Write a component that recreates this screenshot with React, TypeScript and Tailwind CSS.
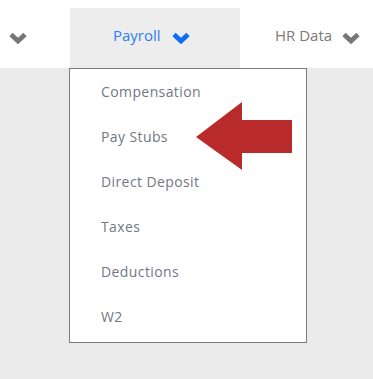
import React from "react";

const items = ["Compensation", "Pay Stubs", "Direct Deposit", "Taxes", "Deductions", "W2"];

function Chevron({ className }: { className?: string }) {
  return (
    <svg viewBox="0 0 18 12" className={className} fill="none" stroke="currentColor" strokeWidth="4.8" strokeLinejoin="miter">
      <polyline points="2,2.5 9,9 16,2.5" />
    </svg>
  );
}

function Arrow() {
  return (
    <svg viewBox="0 0 96 68" className="absolute left-[126px] top-[33px] h-[68px] w-[96px]">
      <polygon points="0,35 46,0 46,18 96,18 96,51 46,51 46,68" fill="#b92b2b" />
    </svg>
  );
}

export default function App() {
  return (
    <div className="h-[379px] w-[373px] overflow-hidden bg-[#ebebeb] font-['Open_Sans',sans-serif]">
      <nav className="flex h-[68px] bg-white">
        <div className="flex w-[70px] items-center pl-[9px] pt-[8px]">
          <Chevron className="h-[12px] w-[18px] text-[#777777]" />
        </div>

        <div className="relative mt-[8px] flex h-[60px] w-[170px] items-center bg-[#ededed] pl-[43px]">
          <span className="-mt-[5px] text-[15px] leading-none text-[#2f7df6]">Payroll</span>
          <Chevron className="ml-[11px] h-[12px] w-[18px] text-[#0e6cf9]" />

          <div className="absolute left-[-1px] top-full h-[275px] w-[238px] border border-[#7a7a7a] bg-white">
            <ul>
              {items.map((item) => (
                <li key={item} className="flex h-[45px] items-center pl-[31px] text-[14px] tracking-[0.4px] text-[#737785]">
                  {item}
                </li>
              ))}
            </ul>
            <Arrow />
          </div>
        </div>

        <div className="flex items-center pl-[35px] pt-[8px]">
          <span className="-mt-[5px] text-[15px] leading-none text-[#7a7a7a]">HR Data</span>
          <Chevron className="ml-[10px] h-[12px] w-[18px] text-[#777777]" />
        </div>
      </nav>
    </div>
  );
}
